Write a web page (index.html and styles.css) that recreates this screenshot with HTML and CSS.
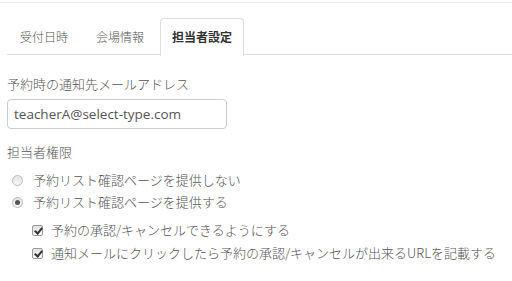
FILE: index.html
```html
<!DOCTYPE html>
<html lang="ja">
<head>
  <meta charset="UTF-8">
  <title>担当者設定</title>
  <link rel="stylesheet" href="styles.css">
</head>
<body>
  <div class="topbar"></div>
  <div class="panel">
    <ul class="tabs">
      <li class="tab">受付日時</li>
      <li class="tab">会場情報</li>
      <li class="tab active">担当者設定</li>
    </ul>

    <div class="form">
      <label class="field-label" for="mail">予約時の通知先メールアドレス</label>
      <input type="text" id="mail" class="text-input" value="teacherA@select-type.com">

      <div class="field-label group-label">担当者権限</div>
      <label class="option radio-row first">
        <input type="radio" name="perm"> 予約リスト確認ページを提供しない
      </label>
      <label class="option radio-row">
        <input type="radio" name="perm" checked> 予約リスト確認ページを提供する
      </label>

      <div class="sub-options">
        <label class="option check-row">
          <input type="checkbox" checked> 予約の承認/キャンセルできるようにする
        </label>
        <label class="option check-row">
          <input type="checkbox" checked> 通知メールにクリックしたら予約の承認/キャンセルが出来るURLを記載する
        </label>
      </div>
    </div>
  </div>
</body>
</html>
```

FILE: styles.css
```css
body {
  margin: 0;
  background: #fff;
  color: #555;
  font-family: "Noto Sans CJK JP", "Noto Sans", sans-serif;
  font-weight: 300;
  font-size: 13px;
}
.topbar {
  height: 2px;
  border-bottom: 1px solid #ebebeb;
}
.panel {
  padding: 15px 0 0 7px;
}
.tabs {
  display: flex;
  margin: 0;
  padding: 0 0 0 1px;
  list-style: none;
  border-bottom: 1px solid #ddd;
  height: 36px;
}
.tab {
  font-size: 12px;
  line-height: 36px;
  padding: 0 11px;
  margin-right: 4px;
  color: #555;
  border: 1px solid transparent;
  border-bottom: none;
}
.tab.active {
  background: #fff;
  color: #333;
  font-weight: bold;
  border-color: #ddd;
  border-radius: 4px 4px 0 0;
  height: 37px;
  margin-bottom: -1px;
}
.form {
  padding-top: 20px;
}
.field-label {
  display: block;
  line-height: 18px;
}
.text-input {
  display: block;
  box-sizing: border-box;
  width: 220px;
  height: 30px;
  margin: 6px 0 0 0;
  padding: 0 6px;
  border: 1px solid #ccc;
  border-radius: 4px;
  color: #555;
  font-family: "Open Sans", "Noto Sans", sans-serif;
  font-size: 13.5px;
}
.group-label {
  margin-top: 14px;
}
.option {
  display: flex;
  align-items: center;
  gap: 10px;
  line-height: 18px;
}
.radio-row {
  margin-top: 4px;
  padding-left: 5px;
}
.radio-row.first {
  margin-top: 10px;
}
.sub-options {
  padding-left: 25px;
  margin-top: 10px;
}
.check-row {
  gap: 8px;
}
.check-row + .check-row {
  margin-top: 5px;
}
input[type="radio"],
input[type="checkbox"] {
  appearance: none;
  margin: 0;
  width: 11px;
  height: 11px;
  flex: none;
  border: 1px solid #bbb;
  background: linear-gradient(#e2e2e2, #f8f8f8);
  position: relative;
}
input[type="radio"] {
  border-radius: 50%;
}
input[type="radio"]:checked::after {
  content: "";
  position: absolute;
  left: 2px;
  top: 2px;
  width: 5px;
  height: 5px;
  border-radius: 50%;
  background: #555;
}
input[type="checkbox"] {
  border-radius: 2px;
  border-color: #999;
}
input[type="checkbox"]:checked::after {
  content: "";
  position: absolute;
  left: 3px;
  top: 0px;
  width: 3px;
  height: 6px;
  border: solid #333;
  border-width: 0 2px 2px 0;
  transform: rotate(40deg);
}
```
